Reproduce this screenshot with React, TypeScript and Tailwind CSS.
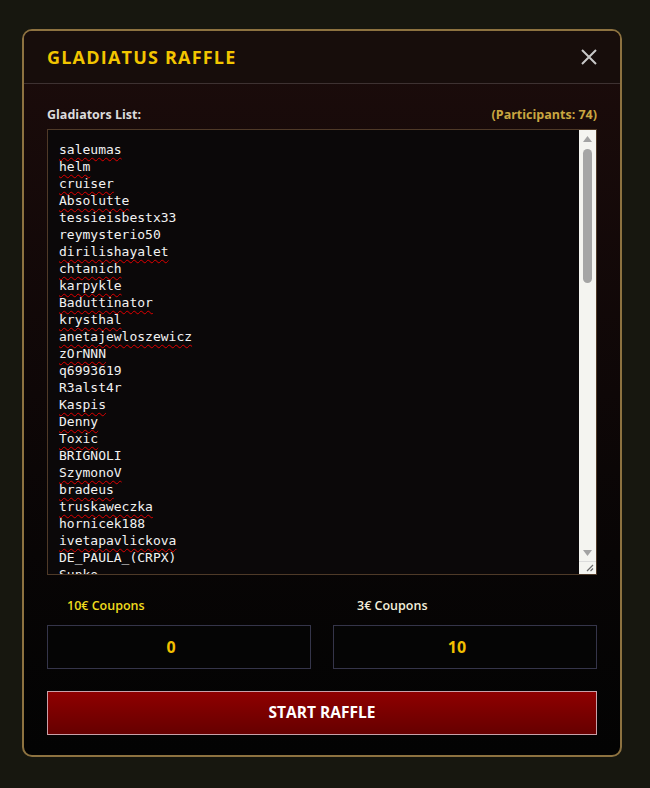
import React from "react";

const gladiators: string[] = [
  "saleumas",
  "helm",
  "cruiser",
  "Absolutte",
  "tessieisbestx33",
  "reymysterio50",
  "dirilishayalet",
  "chtanich",
  "karpykle",
  "Baduttinator",
  "krysthal",
  "anetajewloszewicz",
  "zOrNNN",
  "q6993619",
  "R3alst4r",
  "Kaspis",
  "Denny",
  "Toxic",
  "BRIGNOLI",
  "SzymonoV",
  "bradeus",
  "truskaweczka",
  "hornicek188",
  "ivetapavlickova",
  "DE_PAULA_(CRPX)",
  "Sunko",
];

// spellcheck skips words with digits and all-caps words
const isMarked = (name: string) => !/[0-9]/.test(name) && name !== name.toUpperCase();

const Scrollbar: React.FC = () => (
  <div className="w-[17px] shrink-0 bg-[#f4f4f0] flex flex-col items-center">
    <div className="h-[17px] flex items-center justify-center">
      <svg width="9" height="6" viewBox="0 0 9 6">
        <path d="M4.5 0 L9 6 L0 6 Z" fill="#a3a3a3" />
      </svg>
    </div>
    <div className="w-[9px] h-[134px] mt-[2px] rounded-full bg-[#a5a5a5]" />
    <div className="flex-1" />
    <div className="h-[17px] flex items-center justify-center">
      <svg width="9" height="6" viewBox="0 0 9 6">
        <path d="M0 0 L9 0 L4.5 6 Z" fill="#a3a3a3" />
      </svg>
    </div>
    <div className="h-[13px] w-full border-t border-[#dcdcdc] flex items-end justify-end pr-[2px] pb-[2px]">
      <svg width="8" height="8" viewBox="0 0 8 8">
        <path d="M7 1 L1 7 M7 4.5 L4.5 7" stroke="#6b6b6b" strokeWidth="1.2" />
      </svg>
    </div>
  </div>
);

const App: React.FC = () => {
  return (
    <div className="min-h-screen w-full bg-[#17170f] pt-[29px] pb-[30px] font-['Open_Sans',sans-serif]">
      <div className="ml-[22px] w-[600px] rounded-[10px] border-2 border-[#8d7240] bg-gradient-to-b from-[#1c0c0b] via-[#0e0707] to-[#030303] overflow-hidden">
        <div className="h-[53px] flex items-center justify-between pl-[23px] pr-[22px] border-b border-[#3e3232] bg-[#170d0b]">
          <h1 className="text-[18px] font-bold tracking-[1.2px] text-[#f2c500]">GLADIATUS RAFFLE</h1>
          <button className="text-[#c9c9c9]">
            <svg width="18" height="18" viewBox="0 0 18 18">
              <path d="M2 2 L16 16 M16 2 L2 16" stroke="#c8c8c8" strokeWidth="2" />
            </svg>
          </button>
        </div>

        <div className="px-[23px] pt-[20px] pb-[20px]">
          <div className="flex items-center justify-between h-[22px] mb-[3px] text-[12.5px] font-bold">
            <span className="text-[#dcdcdc]">Gladiators List:</span>
            <span className="text-[#c9a640]">(Participants: 74)</span>
          </div>

          <div className="h-[446px] flex border border-[#4f3a28] bg-[#0b0809]">
            <div className="flex-1 overflow-hidden pl-[11px] pt-[11px] font-['DejaVu_Sans_Mono',monospace] text-[13px] leading-[17px] text-[#f2f2f2]">
              {gladiators.map((name) => (
                <div key={name}>
                  <span
                    className={
                      isMarked(name)
                        ? "underline decoration-wavy decoration-[#e00000] decoration-1 underline-offset-[3px]"
                        : ""
                    }
                  >
                    {name}
                  </span>
                </div>
              ))}
            </div>
            <Scrollbar />
          </div>

          <div className="grid grid-cols-2 gap-[22px] mt-[22px]">
            <div>
              <div className="pl-[20px] h-[18px] text-[12.5px] font-semibold text-[#f0dc1e]">10€ Coupons</div>
              <div className="mt-[10px] h-[44px] flex items-center justify-center pr-[16px] border border-[#35354a] bg-[#050505] text-[16px] font-bold text-[#f2c000]">
                0
              </div>
            </div>
            <div>
              <div className="pl-[24px] h-[18px] text-[12.5px] font-semibold text-[#f3f0dc]">3€ Coupons</div>
              <div className="mt-[10px] h-[44px] flex items-center justify-center pr-[16px] border border-[#35354a] bg-[#050505] text-[16px] font-bold text-[#f2c000]">
                10
              </div>
            </div>
          </div>

          <button className="mt-[22px] w-full h-[44px] border border-[#c9a0a8] bg-gradient-to-b from-[#8f0000] to-[#660000] text-white text-[15.5px] font-bold">
            START RAFFLE
          </button>
        </div>
      </div>
    </div>
  );
};

export default App;
